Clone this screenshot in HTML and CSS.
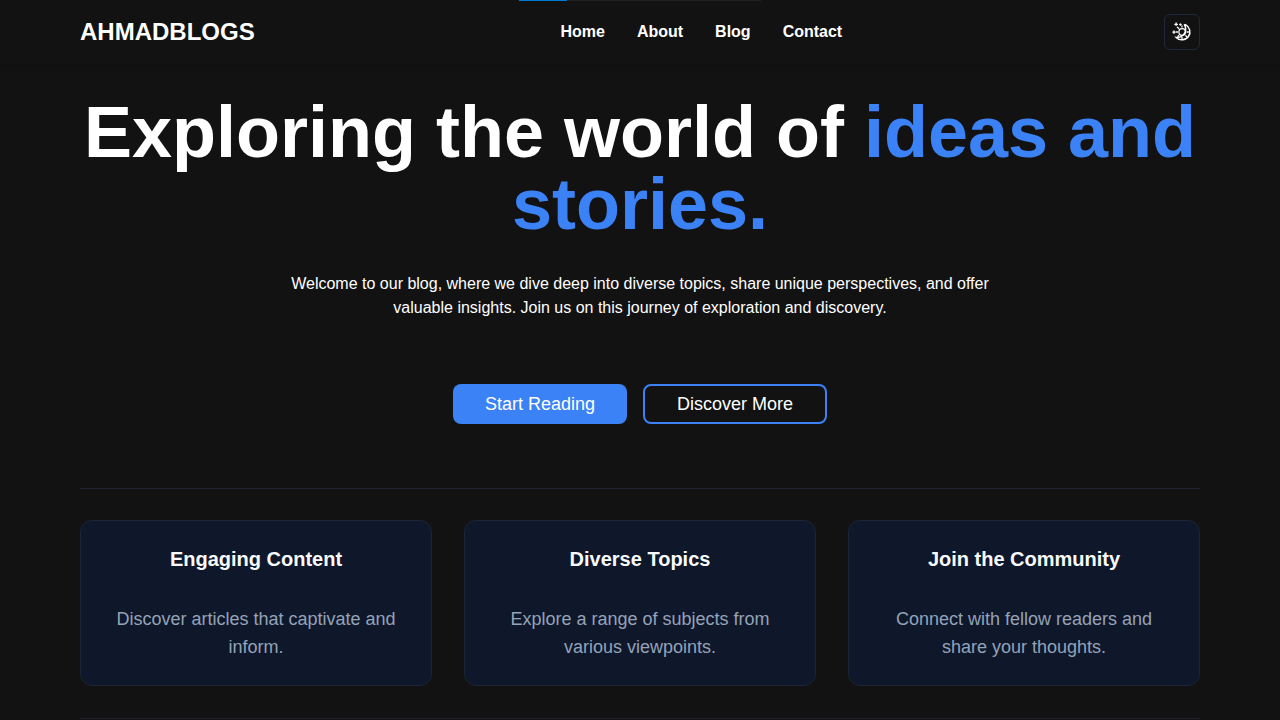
FILE: index.html
```html
<!DOCTYPE html>
<html lang="en">
<head>
    <meta charset="UTF-8">
    <meta name="viewport" content="width=device-width, initial-scale=1.0">
    <title>AhmadBlogs</title>
    <link rel="stylesheet" href="styles.css">
</head>
<body>
    <div class="loader"><div class="loader-bar"></div></div>
    <header class="header">
        <a class="logo" href="#">AHMADBLOGS</a>
        <nav class="nav">
            <a href="#">Home</a>
            <a href="#">About</a>
            <a href="#">Blog</a>
            <a href="#">Contact</a>
        </nav>
        <button class="theme-toggle" type="button" aria-label="Toggle theme">
            <svg viewBox="0 0 20 20" width="20" height="20" fill="none" stroke="currentColor" stroke-linecap="round">
                <path stroke-width="1.5" d="M13.4 2.6A8 8 0 1 1 4.2 15.4C9.6 16 14.4 11.6 13.6 6.2C13.4 4.8 13 3.8 12.4 2.9"/>
                <circle cx="10.2" cy="10" r="3.3" stroke-width="1.2"/>
                <path stroke-width="1.3" d="M5.4 5.2l1.4 1.3M10 4v1M4.4 10h1.2M15 10h1.4M13.8 13.8l.8.8M10 15.2v1.4M6 14.2l.7-.7"/>
                <path stroke-width="1.3" d="M4.1 1v2.6M2.8 2.3h2.6M8.4 1.8v1.4M7.7 2.5h1.4M2 8.9v2.4M.8 10.1h2.4"/>
            </svg>
        </button>
    </header>
    <main class="container">
        <section class="hero">
            <h1>Exploring the world of <span>ideas and stories.</span></h1>
            <p>Welcome to our blog, where we dive deep into diverse topics, share unique perspectives, and offer valuable insights. Join us on this journey of exploration and discovery.</p>
            <div class="actions">
                <button class="btn btn-primary" type="button">Start Reading</button>
                <button class="btn btn-outline" type="button">Discover More</button>
            </div>
        </section>
        <section class="features">
            <div class="card">
                <h3>Engaging Content</h3>
                <p>Discover articles that captivate and inform.</p>
            </div>
            <div class="card">
                <h3>Diverse Topics</h3>
                <p>Explore a range of subjects from various viewpoints.</p>
            </div>
            <div class="card">
                <h3>Join the Community</h3>
                <p>Connect with fellow readers and share your thoughts.</p>
            </div>
        </section>
    </main>
</body>
</html>
```
FILE: styles.css
```css
* {
    box-sizing: border-box;
}
body {
    margin: 0;
    font-family: "Liberation Sans", Arial, sans-serif;
    font-size: 16px;
    line-height: 24px;
    background-color: #121212;
    color: #fff;
}
h1, h3, p {
    margin: 0;
}
a {
    color: inherit;
    text-decoration: none;
}
button {
    font-family: inherit;
    color: inherit;
    cursor: pointer;
}
/* loading bar over the header */
.loader {
    position: absolute;
    top: 0;
    left: 0;
    right: 0;
    width: 242px;
    height: 1px;
    margin: 0 auto;
    background-color: #222;
}
.loader-bar {
    width: 20%;
    height: 100%;
    background-color: #0078d4;
}
.header {
    display: flex;
    justify-content: space-between;
    align-items: center;
    height: 64px;
    padding: 0 80px;
    box-shadow: 0 1px 8px rgba(0, 0, 0, 0.2);
}
.logo {
    font-size: 24px;
    font-weight: bold;
    line-height: 32px;
}
.nav {
    display: flex;
    gap: 32px;
    font-weight: bold;
}
.theme-toggle {
    display: flex;
    justify-content: center;
    align-items: center;
    width: 36px;
    height: 36px;
    margin-left: 16px;
    padding: 0;
    border: 1px solid #1e293b;
    border-radius: 6px;
    background: transparent;
}
.container {
    padding: 0 80px;
}
.hero {
    display: flex;
    flex-direction: column;
    align-items: center;
    padding: 32px 0 64px;
    text-align: center;
}
.hero h1 {
    font-size: 72px;
    line-height: 72px;
}
.hero h1 span {
    color: #3b82f6;
}
.hero p {
    max-width: 736px;
    margin-top: 32px;
}
.actions {
    display: flex;
    flex-wrap: wrap;
    justify-content: center;
    gap: 16px;
    margin-top: 64px;
}
.btn {
    height: 40px;
    padding: 0 32px;
    border: none;
    border-radius: 8px;
    font-size: 18px;
    line-height: 28px;
}
.btn-primary {
    background-color: #3b82f6;
}
.btn-outline {
    border: 2px solid #3b82f6;
    background: transparent;
}
.features {
    display: grid;
    grid-template-columns: repeat(3, 1fr);
    gap: 32px;
    padding: 31px 0 32px;
    border-top: 1px solid #1e2233;
    border-bottom: 1px solid #1e2233;
    text-align: center;
}
.card {
    padding: 24px;
    border: 1px solid #1b2537;
    border-radius: 12px;
    background-color: #0f172a;
}
.card h3 {
    margin-bottom: 32px;
    font-size: 20px;
    line-height: 28px;
    color: #f8fafc;
}
.card p {
    font-size: 18px;
    line-height: 28px;
    color: #94a3b8;
}
@media (max-width: 800px) {
    .features {
        grid-template-columns: 1fr;
    }
    .hero h1 {
        font-size: 48px;
        line-height: 48px;
    }
}
```
